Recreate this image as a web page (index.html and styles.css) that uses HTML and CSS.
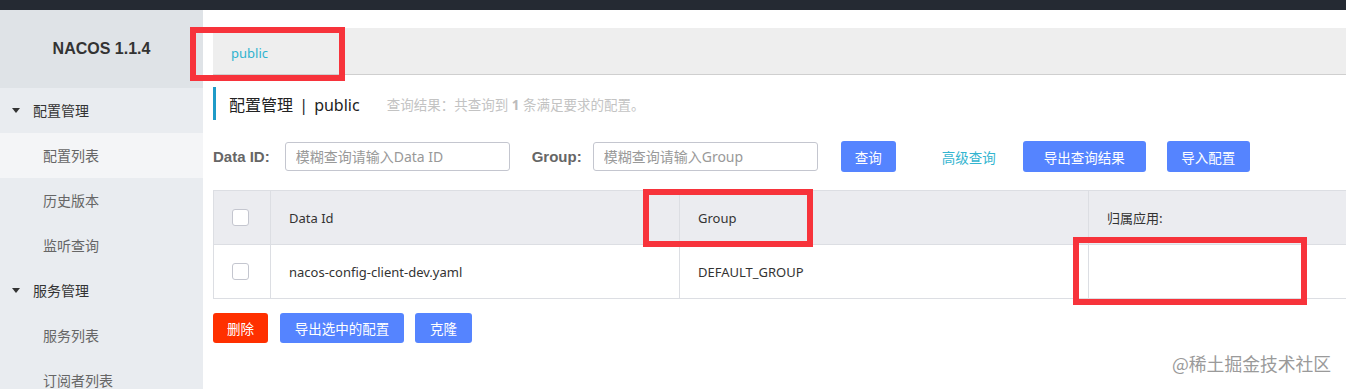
FILE: index.html
```html
<!DOCTYPE html>
<html lang="zh">
<head>
<meta charset="utf-8">
<title>Nacos</title>
<link rel="stylesheet" href="styles.css">
</head>
<body>
<div class="topbar"></div>
<div class="layout">
  <aside class="sidebar">
    <div class="brand">NACOS 1.1.4</div>
    <div class="group"><span class="caret"></span>配置管理</div>
    <div class="item active">配置列表</div>
    <div class="item">历史版本</div>
    <div class="item">监听查询</div>
    <div class="group"><span class="caret"></span>服务管理</div>
    <div class="item">服务列表</div>
    <div class="item">订阅者列表</div>
  </aside>
  <main class="main">
    <div class="tabbar"><span class="tab">public</span></div>
    <div class="title">
      <span class="title-text">配置管理 | public</span>
      <span class="subtitle">查询结果：共查询到 <b>1</b> 条满足要求的配置。</span>
    </div>
    <div class="search">
      <label class="label">Data ID:</label>
      <input class="input" placeholder="模糊查询请输入Data ID">
      <label class="label label-group">Group:</label>
      <input class="input input-group" placeholder="模糊查询请输入Group">
      <button class="btn btn-query">查询</button>
      <a class="link">高级查询</a>
      <button class="btn btn-export">导出查询结果</button>
      <button class="btn btn-import">导入配置</button>
    </div>
    <div class="table">
      <div class="row head">
        <div class="cell c-check"><span class="checkbox"></span></div>
        <div class="cell c-id">Data Id</div>
        <div class="cell c-group">Group</div>
        <div class="cell c-app">归属应用:</div>
      </div>
      <div class="row">
        <div class="cell c-check"><span class="checkbox"></span></div>
        <div class="cell c-id">nacos-config-client-dev.yaml</div>
        <div class="cell c-group">DEFAULT_GROUP</div>
        <div class="cell c-app"></div>
      </div>
    </div>
    <div class="actions">
      <button class="btn btn-danger">删除</button>
      <button class="btn btn-export-sel">导出选中的配置</button>
      <button class="btn btn-clone">克隆</button>
    </div>
  </main>
</div>
<div class="mark mark-1"></div>
<div class="mark mark-2"></div>
<div class="mark mark-3"></div>
<div class="watermark">@稀土掘金技术社区</div>
</body>
</html>
```

FILE: styles.css
```css
* { box-sizing: border-box; }
html, body { margin: 0; padding: 0; }
body {
  width: 1346px;
  height: 389px;
  overflow: hidden;
  background: #fff;
  font-family: "Noto Sans", "Noto Sans CJK SC", sans-serif;
  color: #333;
  position: relative;
}
.topbar { height: 10px; background: #252a33; }
.layout { display: flex; height: 379px; }
.sidebar { width: 203px; flex: none; background: #e9ecf0; }
.brand {
  height: 78px;
  background: #dfe3e7;
  display: flex;
  align-items: center;
  justify-content: center;
  font-weight: bold;
  font-size: 16px;
  color: #333;
  font-family: "Liberation Sans", "Noto Sans", sans-serif;
}
.group, .item {
  height: 45px;
  display: flex;
  align-items: center;
  font-size: 14px;
  line-height: 20px;
}
.group { padding-left: 12px; color: #333; }
.caret {
  width: 0; height: 0;
  border-left: 4.5px solid transparent;
  border-right: 4.5px solid transparent;
  border-top: 5px solid #333;
  margin-right: 13px;
}
.item { padding-left: 43px; color: #666; }
.item.active { background: #f4f5f7; }

.main { flex: 1; padding-left: 10px; padding-top: 18px; overflow: hidden; }
.tabbar {
  height: 47px;
  background: #eeeeee;
  border-bottom: 1px solid #cfcfcf;
  display: flex;
  align-items: center;
}
.tab { padding-left: 18px; font-size: 13px; color: #2fb3cf; padding-top: 4px; }

.title {
  margin-top: 12px;
  height: 33px;
  border-left: 3px solid #1f9bc8;
  display: flex;
  align-items: center;
  padding-left: 13px;
}
.title-text { font-size: 16px; color: #222; white-space: pre; word-spacing: 2px; }
.subtitle { font-size: 13.5px; color: #c3c3c3; margin-left: 27px; }
.subtitle b { color: #bbb; }

.search { display: flex; align-items: center; margin-top: 21px; height: 31px; }
.label { font-size: 15px; font-weight: bold; color: #666; font-family: "Liberation Sans", "Noto Sans CJK SC", sans-serif; }
.input {
  width: 225px;
  height: 29px;
  margin-left: 15px;
  border: 1px solid #c4c6cf;
  border-radius: 3px;
  padding: 0 10px;
  font-size: 14px;
  font-family: "Noto Sans", "Noto Sans CJK SC", sans-serif;
}
.input::placeholder { color: #999; }
.label-group { margin-left: 22px; }
.input-group { margin-left: 11px; }
.btn {
  height: 31px;
  border: none;
  border-radius: 3px;
  background: #5584ff;
  color: #fff;
  font-size: 13.5px;
  font-family: "Noto Sans CJK SC", sans-serif;
  padding: 0;
}
.btn-query { width: 55px; margin-left: 23px; }
.link { font-size: 13.5px; color: #33b5d0; margin-left: 46px; font-family: "Noto Sans CJK SC", sans-serif; }
.btn-export { width: 123px; margin-left: 27px; }
.btn-import { width: 83px; margin-left: 21px; }

.table {
  margin-top: 18px;
  width: 1200px;
  border-top: 1px solid #dcdee3;
  border-left: 1px solid #dcdee3;
}
.row { display: flex; height: 54px; border-bottom: 1px solid #dcdee3; }
.row.head { background: #ebecf0; height: 54px; }
.cell {
  display: flex;
  align-items: center;
  font-size: 13px;
  color: #333;
  padding-left: 18px;
  border-right: 1px solid #dcdee3;
}
.c-check { width: 57px; padding-left: 18px; }
.c-id { width: 409px; }
.c-group { width: 409px; }
.c-app { flex: 1; border-right: none; font-family: "Noto Sans CJK SC", sans-serif; }
.checkbox {
  width: 17px; height: 17px;
  border: 1px solid #c4c6cf;
  border-radius: 3px;
  background: #fff;
}

.actions { display: flex; margin-top: 14px; gap: 12px; }
.actions .btn { height: 30px; }
.btn-danger { width: 55px; background: #ff3000; }
.btn-export-sel { width: 124px; }
.btn-clone { width: 57px; margin-left: -1px; }

.mark { position: absolute; border: 6px solid #f7333b; }
.mark-1 { left: 190px; top: 27px; width: 155px; height: 54px; }
.mark-2 { left: 643px; top: 189px; width: 170px; height: 58px; }
.mark-3 { left: 1073px; top: 237px; width: 234px; height: 68px; }

.watermark {
  position: absolute;
  left: 1172px;
  top: 350px;
  font-size: 17.8px;
  color: #9a9a9a;
  font-family: "Noto Sans CJK SC", sans-serif;
  line-height: 26px;
}
```
